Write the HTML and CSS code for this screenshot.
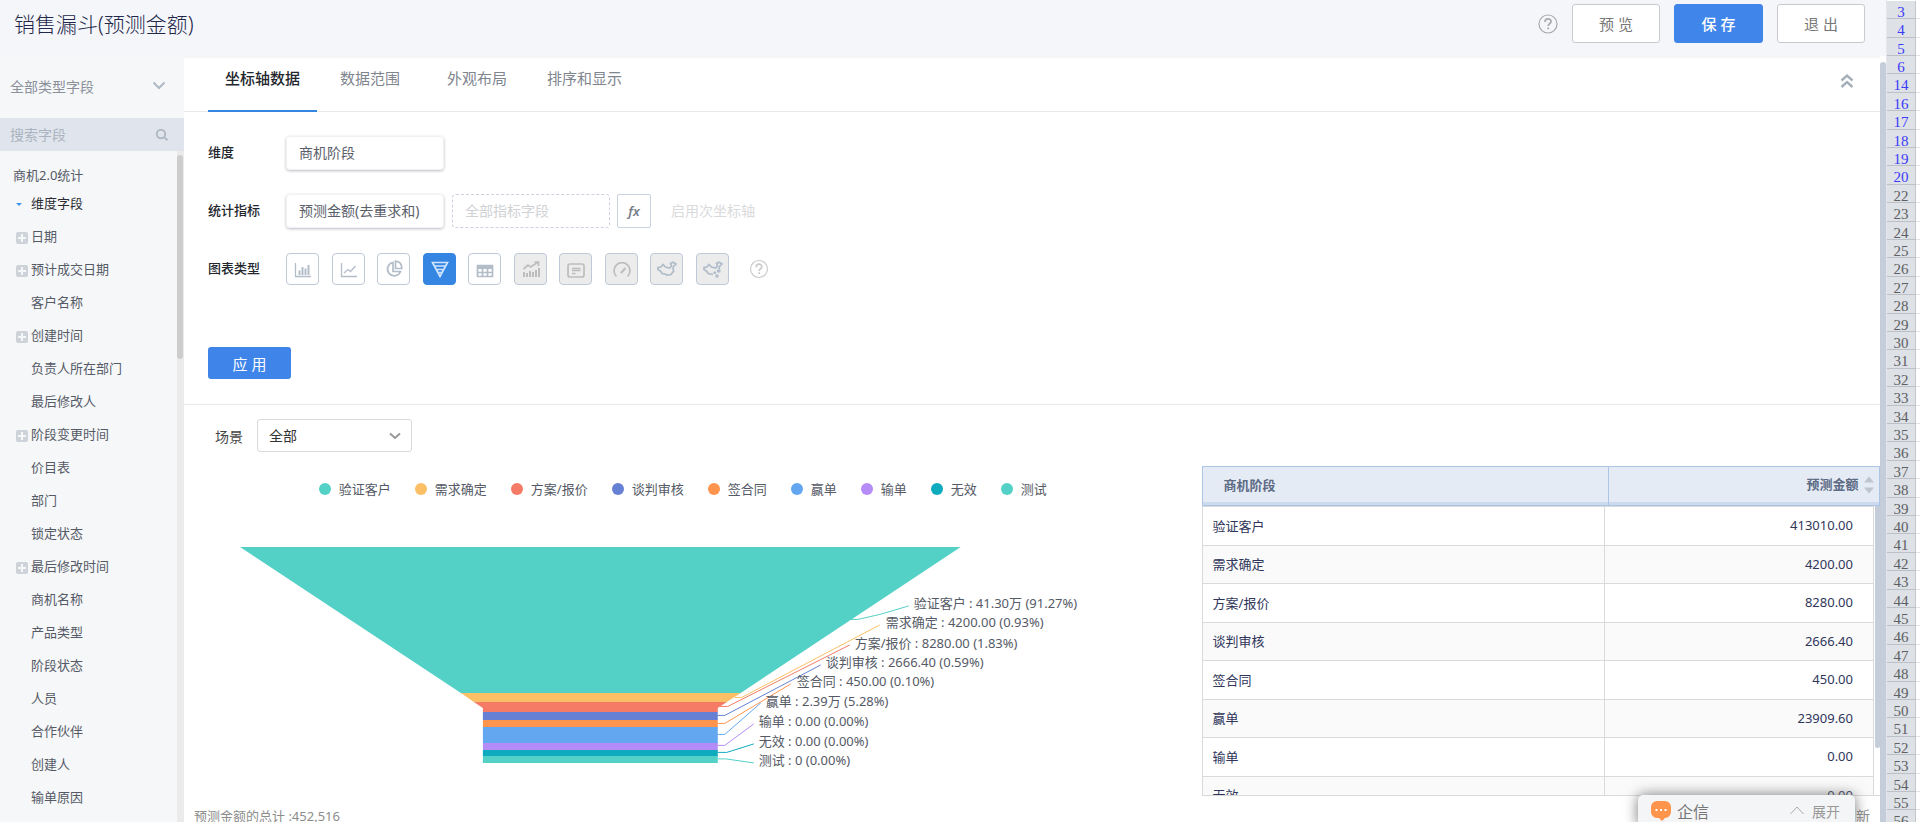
FILE: index.html
```html
<!DOCTYPE html>
<html lang="zh-CN">
<head>
<meta charset="utf-8">
<title>销售漏斗(预测金额)</title>
<link rel="stylesheet" href="styles.css">
</head>
<body>
<div class="screen">
<div class="app">
  <header class="topbar">
    <h1 class="topbar-title">销售漏斗(预测金额)</h1>
    <div class="topbar-actions">
      <svg class="help" width="20" height="20" viewBox="0 0 20 20" aria-hidden="true"><circle cx="10" cy="10" r="9"/><path class="help-mark" d="M7 8c0-4 6-4 6-.5 0 2-2.800 2.200-2.800 4.500M10.200 13.500v1.800"/></svg>
      <button class="btn" type="button">预 览</button>
      <button class="btn btn-primary" type="button">保 存</button>
      <button class="btn" type="button">退 出</button>
    </div>
  </header>
  <div class="workspace">
    <aside class="sidebar">
      <button class="type-filter" type="button">全部类型字段
        <svg width="14" height="9" viewBox="0 0 14 9" aria-hidden="true"><path d="M1.500 1.500 7 7l5.500-5.500"/></svg>
      </button>
      <div class="search">
        <input class="search-input" type="text" placeholder="搜索字段" aria-label="搜索字段">
        <svg width="14" height="14" viewBox="0 0 14 14" aria-hidden="true"><circle cx="6" cy="6" r="4.200"/><path d="m9.300 9.300 3.200 3"/></svg>
      </div>
      <div class="tree-wrap">
        <div class="tree">
          <div class="tree-root">商机2.0统计</div>
          <div class="tree-group"><i class="caret"></i>维度字段</div>
          <ul class="tree-list">
            <li><i class="plus"></i>日期</li>
            <li><i class="plus"></i>预计成交日期</li>
            <li>客户名称</li>
            <li><i class="plus"></i>创建时间</li>
            <li>负责人所在部门</li>
            <li>最后修改人</li>
            <li><i class="plus"></i>阶段变更时间</li>
            <li>价目表</li>
            <li>部门</li>
            <li>锁定状态</li>
            <li><i class="plus"></i>最后修改时间</li>
            <li>商机名称</li>
            <li>产品类型</li>
            <li>阶段状态</li>
            <li>人员</li>
            <li>合作伙伴</li>
            <li>创建人</li>
            <li>输单原因</li>
          </ul>
        </div>
        <div class="tree-scroll"><div class="tree-thumb"></div></div>
      </div>
    </aside>
    <main class="content">
      <nav class="tabs">
        <button class="tab tab-active" type="button">坐标轴数据</button>
        <button class="tab" type="button">数据范围</button>
        <button class="tab" type="button">外观布局</button>
        <button class="tab" type="button">排序和显示</button>
        <svg class="collapse" width="14" height="16" viewBox="0 0 14 16" aria-hidden="true"><path d="m1.500 7.500 5.500-5 5.500 5M1.500 14 7 9l5.500 5"/></svg>
      </nav>
      <section class="settings">
        <div class="field-row">
          <span class="field-label">维度</span>
          <div class="pill">商机阶段</div>
        </div>
        <div class="field-row">
          <span class="field-label">统计指标</span>
          <div class="pill">预测金额(去重求和)</div>
          <div class="drop">全部指标字段</div>
          <button class="fx" type="button">fx</button>
          <span class="secondary">启用次坐标轴</span>
        </div>
        <div class="field-row">
          <span class="field-label">图表类型</span>
          <div class="types">
            <button class="type" type="button" aria-label="柱状图"><svg width="18" height="16" viewBox="0 0 18 16"><path d="M1.500 1v13.500H17" /><path class="thick" d="M5.500 8.500V13M8.500 5V13M11.500 6.500V13M14.500 3V13"/></svg></button>
            <button class="type" type="button" aria-label="折线图"><svg width="18" height="16" viewBox="0 0 18 16"><path d="M1.500 1v13.500H17M4 11l4-3.500 2.500 2L15.500 4"/></svg></button>
            <button class="type" type="button" aria-label="饼图"><svg width="18" height="18" viewBox="0 0 18 18"><path class="wide" d="M8 2.500a6.700 6.700 0 1 0 7.500 9H8zM10.500 1.200v7.300h6.300c0-4-2.300-7-6.300-7.300z"/></svg></button>
            <button class="type type-active" type="button" aria-label="漏斗图"><svg width="18" height="17" viewBox="0 0 18 17"><path class="wide" d="M1.500 1.500h15L9 15.500zM3.500 5h11M5.500 8.500h7M7.300 11.500h3.400"/></svg></button>
            <button class="type" type="button" aria-label="表格"><svg width="18" height="14" viewBox="0 0 18 14"><path class="wide" d="M1.500 1.500h15v11h-15zM1.500 8.500h15M6.500 4v8.500M11.500 4v8.500"/><path class="head" d="M1 3h16"/></svg></button>
            <button class="type type-off" type="button" aria-label="组合图"><svg width="18" height="18" viewBox="0 0 18 18"><path class="wide" d="m1.500 9 4.500-4 2.500 2 7-4.500M12.500 2h4v4"/><path class="thick" d="M2 12v5M5 13v4M8 11v6M11 12v5M14 10v7M17 8v9"/></svg></button>
            <button class="type type-off" type="button" aria-label="指标卡"><svg width="18" height="15" viewBox="0 0 18 15"><rect class="wide" x="1" y="1" width="16" height="13" rx="2"/><path d="M5 5.500h8.500M5 7.500h8.500M5 10.500h3.500"/></svg></button>
            <button class="type type-off" type="button" aria-label="仪表盘"><svg width="18" height="16" viewBox="0 0 18 16"><path class="wide" d="M3.500 14.500a8 8 0 1 1 11 0" /><path class="thick" d="m8 11 4.500-5"/></svg></button>
            <button class="type type-off" type="button" aria-label="地图"><svg width="20" height="17" viewBox="0 0 20 17"><path class="map" d="m1 6.500 3-.5 2-2.500 2.500 2.500 4 1 2-2-1-2.500L16 1.200l3 1.800-2.500 2.500-.5 2.500.7 2-2.700 3.500-4 .5-2-1-3-.5-1-2L1 8.500z"/></svg></button>
            <button class="type type-off" type="button" aria-label="散点地图"><svg width="20" height="17" viewBox="0 0 20 17"><path class="map" d="m10 13.500-2-.5-3-.5-1-2L1 8.500v-2L4 6l2-2.500L8.500 6l4 1 2-2-1-2.500L16 1.200l3 1.800-2.500 2.500-.5 2.500"/><path class="dots" d="M14 8.500h3.500v3H14zM10.500 10.500H13V13h-2.500zM12.500 13.500h3v3h-3z"/></svg></button>
          </div>
          <svg class="help help-light" width="20" height="20" viewBox="0 0 20 20" aria-hidden="true"><circle cx="10" cy="10" r="8.500"/><path class="help-mark" d="M7.200 8.200c0-4 5.600-4 5.600-.5 0 2-2.600 2.200-2.600 4.300M10.200 13.300v1.700"/></svg>
        </div>
        <button class="apply" type="button">应 用</button>
      </section>
      <section class="report">
        <div class="scene">
          <label for="scene">场景</label>
          <span class="select-box">
            <select id="scene" class="select"><option>全部</option></select>
            <svg class="select-arrow" width="12" height="8" viewBox="0 0 12 8" aria-hidden="true"><path d="m1 1.500 5 4.500 5-4.500"/></svg>
          </span>
        </div>
        <div class="panels">
          <div class="chart">
            <ul class="legend">
              <li><i class="dot teal"></i>验证客户</li>
              <li><i class="dot yellow"></i>需求确定</li>
              <li><i class="dot red"></i>方案/报价</li>
              <li><i class="dot indigo"></i>谈判审核</li>
              <li><i class="dot orange"></i>签合同</li>
              <li><i class="dot blue"></i>赢单</li>
              <li><i class="dot purple"></i>输单</li>
              <li><i class="dot cyan"></i>无效</li>
              <li><i class="dot teal"></i>测试</li>
            </ul>
            <svg class="funnel" viewBox="184 530 1018 250" role="img" aria-label="销售漏斗">
              <path class="teal" d="M240 547h721L741 693H461z"/>
              <path class="yellow" d="M461 693h280l-14 9H474z"/>
              <path class="red" d="M474 702h253l-9 6v4H483v-4z"/>
              <path class="indigo" d="M483 712h235v8H483z"/>
              <path class="orange" d="M483 720h235v7H483z"/>
              <path class="blue" d="M483 727h235v16H483z"/>
              <path class="purple" d="M483 743h235v7H483z"/>
              <path class="cyan" d="M483 750h235v6H483z"/>
              <path class="teal" d="M483 756h235v7H483z"/>
              <g class="leaders">
                <path class="teal" d="M850 619.500h8l22-5 29-8.500"/>
                <path class="yellow" d="M735 697.500h7l138-72.500"/>
                <path class="red" d="M720 706.500h8L850 645"/>
                <path class="indigo" d="M718 715.500h7L821 665"/>
                <path class="orange" d="M718 723.500h7L791 684"/>
                <path class="blue" d="M718 734.500h7L761 703"/>
                <path class="purple" d="M718 745.500h7L754 724"/>
                <path class="cyan" d="M718 752.500h9L754 744"/>
                <path class="teal" d="M718 759h8l28 4"/>
              </g>
              <g class="labels">
                <text x="914" y="608">验证客户 : 41.30万 (91.27%)</text>
                <text x="886" y="627">需求确定 : 4200.00 (0.93%)</text>
                <text x="855" y="648">方案/报价 : 8280.00 (1.83%)</text>
                <text x="826" y="667">谈判审核 : 2666.40 (0.59%)</text>
                <text x="797" y="686">签合同 : 450.00 (0.10%)</text>
                <text x="766" y="706">赢单 : 2.39万 (5.28%)</text>
                <text x="759" y="726">输单 : 0.00 (0.00%)</text>
                <text x="759" y="746">无效 : 0.00 (0.00%)</text>
                <text x="759" y="765">测试 : 0 (0.00%)</text>
              </g>
            </svg>
          </div>
          <div class="data">
            <table class="data-head">
              <thead><tr><th>商机阶段</th><th class="num">预测金额 <svg width="10" height="18" viewBox="0 0 10 18" aria-hidden="true"><path d="m0 6.500 5-6 5 6zM0 11.500h10l-5 6z"/></svg></th></tr></thead>
            </table>
            <div class="data-scroll">
              <table class="data-body">
                <tbody>
                  <tr><td>验证客户</td><td class="num">413010.00</td></tr>
                  <tr><td>需求确定</td><td class="num">4200.00</td></tr>
                  <tr><td>方案/报价</td><td class="num">8280.00</td></tr>
                  <tr><td>谈判审核</td><td class="num">2666.40</td></tr>
                  <tr><td>签合同</td><td class="num">450.00</td></tr>
                  <tr><td>赢单</td><td class="num">23909.60</td></tr>
                  <tr><td>输单</td><td class="num">0.00</td></tr>
                  <tr><td>无效</td><td class="num">0.00</td></tr>
                </tbody>
              </table>
              <div class="data-track"><div class="data-thumb"></div></div>
            </div>
          </div>
        </div>
        <footer class="summary"><span>预测金额的总计 :452,516</span><a class="refresh" href="#">刷新</a></footer>
      </section>
    </main>
    <div class="page-scroll"></div>
  </div>
  <div class="chat">
    <svg width="22" height="20" viewBox="0 0 22 20" aria-hidden="true"><path class="orange" d="M7 0h8a6 6 0 0 1 6 6v5a6 6 0 0 1-6 6l-3 3-3-3H7a6 6 0 0 1-6-6V6a6 6 0 0 1 6-6z"/><path class="chat-dots" d="M5.500 8h2v2h-2zM10 8h2v2h-2zM14.500 8h2v2h-2z"/></svg>
    <span class="chat-name">企信</span>
    <svg class="chat-arrow" width="14" height="9" viewBox="0 0 14 9" aria-hidden="true"><path d="m.5 8 6.500-7 6.500 7"/></svg>
    <button class="chat-open" type="button">展开</button>
  </div>
</div>
<ol class="sheet">
  <li class="hit">3</li><li class="hit">4</li><li class="hit">5</li><li class="hit">6</li><li class="hit">14</li><li class="hit">16</li><li class="hit">17</li><li class="hit">18</li><li class="hit">19</li><li class="hit">20</li>
  <li>22</li><li>23</li><li>24</li><li>25</li><li>26</li><li>27</li><li>28</li><li>29</li><li>30</li><li>31</li><li>32</li><li>33</li><li>34</li><li>35</li><li>36</li><li>37</li><li>38</li><li>39</li><li>40</li><li>41</li><li>42</li><li>43</li><li>44</li><li>45</li><li>46</li><li>47</li><li>48</li><li>49</li><li>50</li><li>51</li><li>52</li><li>53</li><li>54</li><li>55</li><li>56</li>
</ol>
</div>
</body>
</html>
```
FILE: styles.css
```css
* { box-sizing: border-box; }
body { margin: 0; font-family: "Noto Sans", "Noto Sans CJK SC", sans-serif; font-size: 13px; color: #555a66; background: #fff; }
button, input, select { font: inherit; }
button { cursor: pointer; padding: 0; }
ul, ol { list-style: none; margin: 0; padding: 0; }
svg { flex: none; fill: none; }
.screen { display: flex; height: 100vh; overflow: hidden; }
.app { position: relative; flex: 1; min-width: 0; display: flex; flex-direction: column; overflow: hidden; }

/* top bar */
.topbar { flex: none; display: flex; justify-content: space-between; align-items: flex-start; height: 56px; padding: 4px 21px 0 14px; background: #f5f6fa; }
.topbar-title { margin: 0; font-size: 21px; line-height: 41px; font-weight: 300; color: #23284a; }
.topbar-actions { display: flex; align-items: center; gap: 14px; }
.btn { width: 88px; height: 39px; border: 1px solid #c9cacd; border-radius: 3px; background: #fff; color: #777; font-size: 15px; }
.btn-primary { width: 89px; border-color: #3f85ea; background: #3f85ea; color: #fff; font-weight: 500; }
.help { stroke: #aaa; stroke-width: 1.2; }
.help-mark { stroke-width: 1.8; }
.help-light { stroke: #ccc; }

.workspace { flex: 1; min-height: 0; display: flex; }
.sidebar { flex: none; width: 184px; display: flex; flex-direction: column; background: #f5f7f9; }
.type-filter { flex: none; display: flex; align-items: center; justify-content: space-between; height: 62px; padding: 0 18px 3px 10px; border: 0; background: none; color: #8b9099; font-size: 14px; }
.type-filter svg { stroke: #b0bac5; stroke-width: 2; }
.search { flex: none; display: flex; align-items: center; height: 33px; padding: 0 15px 0 10px; background: #e0e5ed; }
.search-input { flex: 1; min-width: 0; padding: 0; border: 0; background: none; outline: 0; font-size: 14px; }
.search-input::placeholder { color: #aab4c0; }
.search svg { stroke: #b0bac5; stroke-width: 2; }
.tree-wrap { flex: 1; min-height: 0; display: flex; overflow: hidden; }
.tree { flex: 1; padding-top: 12px; }
.tree-root { padding-left: 13px; line-height: 24px; }
.tree-group { display: flex; align-items: center; height: 32px; padding: 0 0 1px 16px; color: #2b2d33; }
.caret { width: 6px; margin: 3px 9px 0 0; border: 3px solid transparent; border-top-color: #3f95ea; border-bottom: 0; }
.tree-list li { display: flex; align-items: center; height: 33px; padding-left: 31px; white-space: nowrap; }
.plus { flex: none; width: 12px; height: 12px; margin: 4px 3px 0 -15px; border-radius: 2px; background: linear-gradient(#f5f7f9, #f5f7f9) center / 8px 2px no-repeat, linear-gradient(#f5f7f9, #f5f7f9) center / 2px 8px no-repeat, #ced3d9; }
.tree-scroll { width: 7px; padding-top: 4px; background: #ebebeb; }
.tree-thumb { height: 204px; width: 6px; border-radius: 3px; background: #cdcdcd; }

.content { flex: 1; min-width: 0; display: flex; flex-direction: column; box-shadow: inset 0 3px 3px -2px #eceef2; }
.tabs { flex: none; display: flex; gap: 6px; height: 56px; padding: 0 26px 0 24px; border-bottom: 1px solid #e9eaec; }
.tab { height: 56px; padding: 0 17px 12px; border: 0; border-bottom: 2px solid transparent; background: none; color: #80858e; font-size: 15px; }
.tab:nth-child(3) { margin-left: 7px; }
.tab-active { border-bottom-color: #3585e3; color: #23262c; font-weight: 500; }
.collapse { margin: 17px 0 0 auto; stroke: #a5afba; stroke-width: 2.4; }

.settings { flex: none; padding: 24px 24px 25px; border-bottom: 1px solid #e9eaec; }
.field-row { display: flex; align-items: center; height: 34px; margin-bottom: 24px; }
.field-label { width: 78px; padding-bottom: 3px; color: #23262c; font-weight: 500; }
.pill, .drop { width: 158px; height: 34px; padding-left: 12px; line-height: 32px; border-radius: 4px; font-size: 14px; }
.pill { border: 1px solid #f1f1f3; box-shadow: 0 1px 3px #b9bdc3; color: #5a606b; }
.drop { margin-left: 8px; border: 1px dashed #cdd1df; color: #d0d2d6; }
.fx { width: 34px; height: 34px; margin: 0 20px 0 7px; border: 1px solid #c8d3e2; border-radius: 2px; background: #fff; color: #777d8a; font-style: italic; font-weight: 600; }
.secondary { font-size: 14px; line-height: 32px; color: #d9dadc; }
.types { display: flex; justify-content: space-between; width: 443px; margin-right: 20px; }
.type { display: flex; align-items: flex-end; justify-content: center; width: 33px; height: 32px; padding: 0 0 6px 1px; border: 1px solid #bfcad8; border-radius: 4px; background: #fff; stroke: #b3bdc8; stroke-width: 1.3; }
.type .thick { stroke-width: 2; }
.type .head { stroke-width: 4; }
.type .wide { stroke-width: 1.7; }
.type-off { background: #ececec; stroke: #bdbdbd; }
.type .map { stroke: #b0bcc9; stroke-width: 1.7; }
.dots { fill: #b0bcc9; stroke: none; }
.type-active { background: #3486e2; border-color: #3486e2; stroke: #cfe4ff; }
.apply { display: block; width: 83px; height: 32px; margin-top: 61px; border: 0; border-radius: 3px; background: #3f84e9; color: #fff; font-size: 15px; }

/* report */
.report { flex: 1; min-height: 0; display: flex; flex-direction: column; }
.scene { flex: none; display: flex; align-items: center; gap: 14px; height: 61px; padding: 0 0 0 31px; font-size: 14px; color: #444; }
.select-box { position: relative; }
.select { display: block; width: 155px; height: 33px; padding: 0 11px; border: 1px solid #d8d9db; border-radius: 3px; appearance: none; background: #fff; color: #333; }
.select-arrow { position: absolute; right: 11px; top: 13px; stroke: #999; stroke-width: 2; }
.panels { flex: 1; min-height: 0; display: grid; grid-template-columns: 3fr 2fr; }
.chart { min-width: 0; padding-top: 13px; }
.legend { display: flex; justify-content: center; gap: 24px; padding-right: 20px; line-height: 20px; }
.legend li { display: flex; align-items: center; gap: 8px; white-space: nowrap; }
.dot { width: 12px; height: 12px; border-radius: 50%; }
.funnel { display: block; width: 100%; margin-top: 31px; }
.teal { fill: #54d1c7; background: #54d1c7; stroke: #54d1c7; }
.yellow { fill: #fbbf65; background: #fbbf65; stroke: #fbbf65; }
.red { fill: #f57b67; background: #f57b67; stroke: #f57b67; }
.indigo { fill: #6681d3; background: #6681d3; stroke: #6681d3; }
.orange { fill: #ff944d; background: #ff944d; stroke: #ff944d; }
.blue { fill: #62a7f0; background: #62a7f0; stroke: #62a7f0; }
.purple { fill: #b58bf7; background: #b58bf7; stroke: #b58bf7; }
.cyan { fill: #0dabbd; background: #0dabbd; stroke: #0dabbd; }
.funnel path, .chat .orange { background: none; stroke-width: 0; }
.funnel .leaders path { fill: none; stroke-width: 1; }
.labels { font-size: 13px; fill: #555a66; }

.data { min-width: 0; min-height: 0; display: flex; flex-direction: column; }
table { border-collapse: collapse; table-layout: fixed; }
.num { text-align: right; }
.data-head { flex: none; width: 100%; border: 1px solid #adc4e4; background: #e5ebf5; box-shadow: inset 0 -3px #cbdaee; }
.data-head th { height: 39px; padding: 0 21px 4px; border-left: 1px solid #adc4e4; font-weight: 600; color: #5d6b85; text-align: left; }
.data-head th:first-child { width: 406px; }
.data-head .num { padding-right: 5px; text-align: right; }
.data-head svg { margin-left: 2px; vertical-align: middle; fill: #bfc5d0; }
.data-scroll { flex: 1; min-height: 0; display: flex; align-items: flex-start; overflow: hidden; border-bottom: 1px solid #d9d9d9; }
.data-body { flex: 1; color: #30365a; }
.data-body td { height: 38px; padding: 0 10px 2px; border: 1px solid #d9dadb; }
.data-body tr:nth-child(odd) td { height: 39px; }
.data-body tr:nth-child(even) { background: #fafafa; }
.data-body td:first-child { width: 402px; }
.data-body .num { padding-right: 20px; }
.data-track { width: 5px; margin-left: 1px; }
.data-thumb { height: 242px; background: #c5ccda; border-radius: 0 0 3px 3px; }
.summary { flex: none; display: flex; justify-content: space-between; height: 26px; padding: 7px 10px 0 10px; line-height: 26px; color: #8c8c8c; }
.refresh { color: #8c8c8c; font-size: 14px; text-decoration: none; }
.page-scroll { flex: none; width: 6px; margin-top: 6px; border-radius: 3px 3px 0 0; background: #c5ccda; }

/* chat bar floats over the report */
.chat { position: absolute; right: 31px; bottom: -4px; display: flex; align-items: center; width: 217px; height: 31px; padding: 0 15px 0 12px; border-radius: 5px 5px 0 0; background: #f4f5f7; box-shadow: 0 0 14px #777; }
.chat-dots { fill: #fff; }
.chat-name { margin-left: 5px; font-size: 16px; color: #777; }
.chat-arrow { margin: 0 8px 0 auto; stroke: #aaa; }
.chat-open { border: 0; background: none; color: #999; font-size: 14px; }

/* spreadsheet row headers */
.sheet { flex: none; width: 34px; padding-top: 1px; border-left: 1px solid #e3e6ec; background: #fff; font-family: "Liberation Serif", serif; font-size: 15px; color: #5c5f63; }
.sheet li {
  height: 18px; padding: 3px 5px 0 0; line-height: 17px; text-align: center;
  background:
    linear-gradient(#bdc1c7, #bdc1c7) 0 100% / 29px 1px no-repeat,
    linear-gradient(#c3c7cd, #c3c7cd) 28px 0 / 1px 100% no-repeat,
    linear-gradient(#dee1e6, #dee1e6) 0 0 / 28px 100% no-repeat,
    linear-gradient(#e3e3e3, #e3e3e3) 0 100% / 100% 1px no-repeat;
}
.sheet li:nth-child(5n+2), .sheet li:nth-child(5n+5) { height: 19px; }
.sheet .hit { color: #3b3bfa; }
```
